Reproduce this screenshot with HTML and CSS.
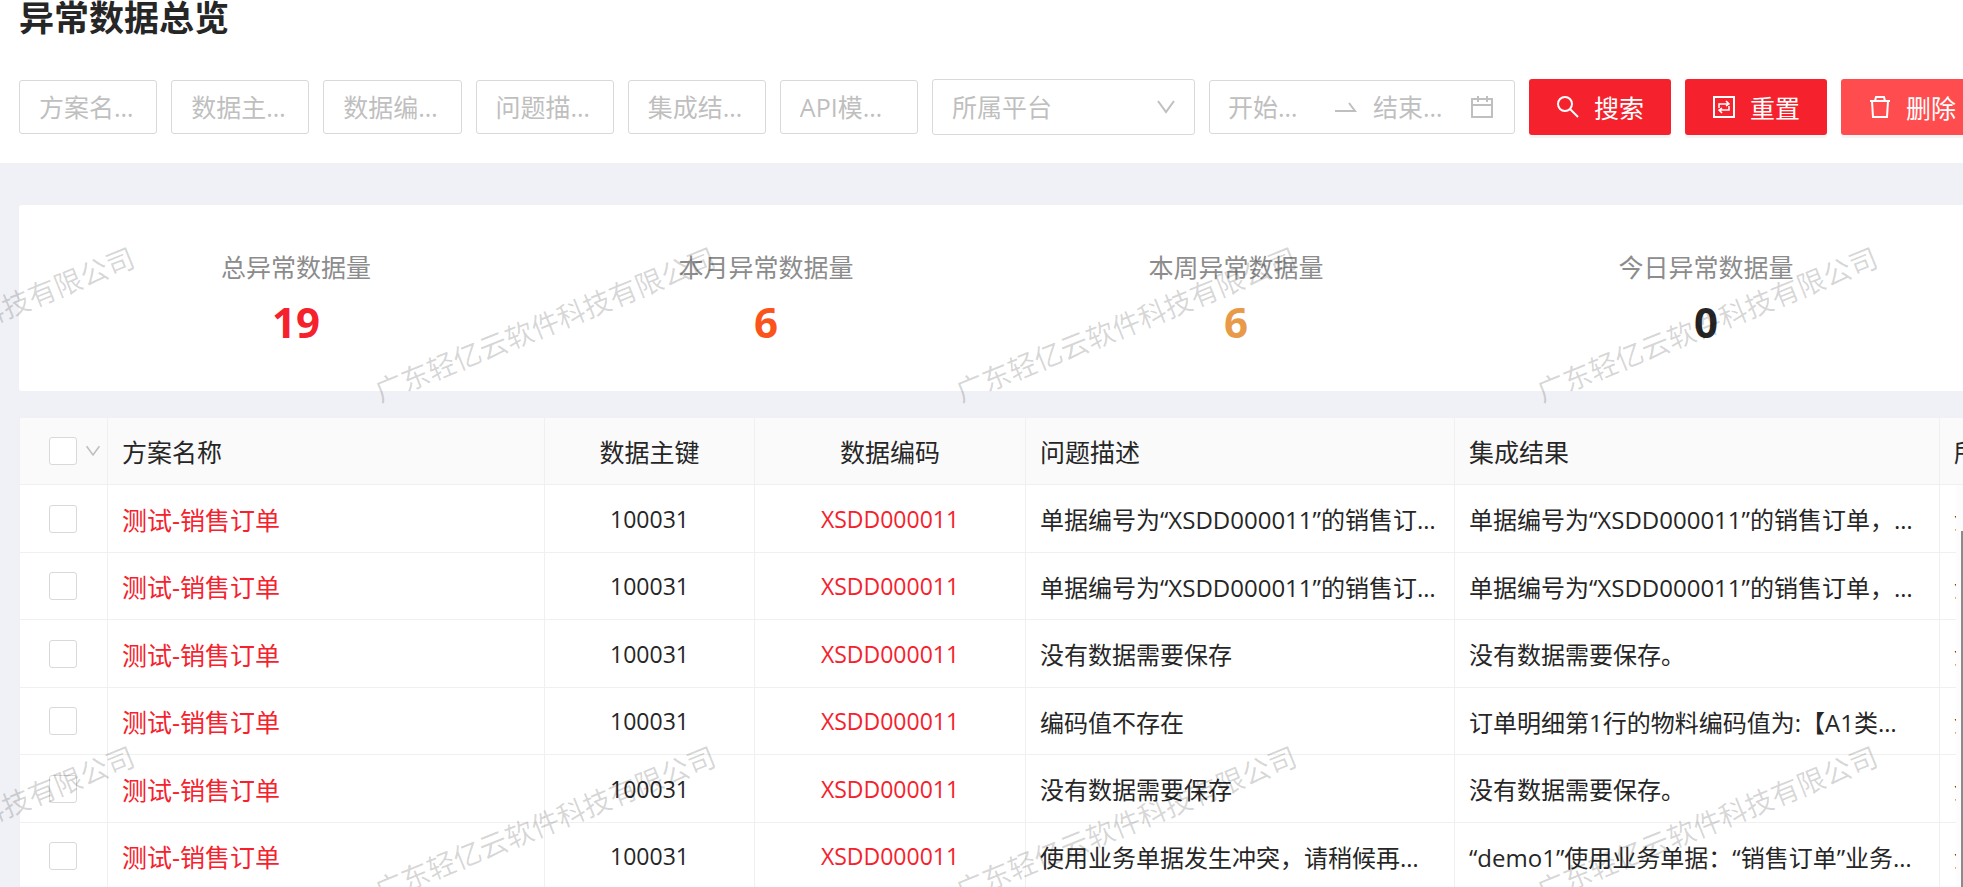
FILE: index.html
```html
<!DOCTYPE html>
<html lang="zh-CN">
<head>
<meta charset="utf-8">
<title>异常数据总览</title>
<link rel="stylesheet" href="styles.css">
</head>
<body>
<div class="page">
  <header class="page-header">
    <h1 class="title">异常数据总览</h1>
    <form class="filters">
      <input class="field" type="text" placeholder="方案名称" aria-label="方案名称">
      <input class="field" type="text" placeholder="数据主键" aria-label="数据主键">
      <input class="field" type="text" placeholder="数据编码" aria-label="数据编码">
      <input class="field" type="text" placeholder="问题描述" aria-label="问题描述">
      <input class="field" type="text" placeholder="集成结果" aria-label="集成结果">
      <input class="field" type="text" placeholder="API模块名" aria-label="API模块名">
      <div class="select-wrap">
        <select class="select" aria-label="所属平台"><option>所属平台</option></select>
        <svg class="select-arrow" viewBox="0 0 20 20"><path d="M2 4l8 11 8-11"/></svg>
      </div>
      <div class="range">
        <input class="range-input" type="text" placeholder="开始日期" aria-label="开始日期">
        <svg class="range-arrow" viewBox="0 0 24 24"><path d="M2 16h20l-6-8"/></svg>
        <input class="range-input" type="text" placeholder="结束日期" aria-label="结束日期">
        <svg class="range-icon" viewBox="0 0 24 24"><path d="M2 4h20v18H2zM2 10h20M8 1v6M17 1v6"/></svg>
      </div>
      <button class="btn" type="button"><svg class="btn-icon" viewBox="0 0 24 24"><circle cx="9" cy="9" r="7"/><path d="M14 14l8 8"/></svg>搜索</button>
      <button class="btn" type="button"><svg class="btn-icon" viewBox="0 0 24 24"><path d="M2 2h20v20H2z"/><path class="thin" d="M7 13V9h10M14 6l3 3-3 2M17 11v4H7M10 13l-3 2 3 3"/></svg>重置</button>
      <button class="btn btn-danger" type="button"><svg class="btn-icon" viewBox="0 0 24 24"><path d="M2 6h20M4 6l1 16h14l1-16M7 6l1-4h8l1 4"/></svg>删除</button>
    </form>
  </header>

  <main class="content">
    <section class="stats">
      <div class="stat"><span class="stat-label">总异常数据量</span><strong class="stat-value red">19</strong></div>
      <div class="stat"><span class="stat-label">本月异常数据量</span><strong class="stat-value orange">6</strong></div>
      <div class="stat"><span class="stat-label">本周异常数据量</span><strong class="stat-value amber">6</strong></div>
      <div class="stat"><span class="stat-label">今日异常数据量</span><strong class="stat-value">0</strong></div>
    </section>

    <div class="table-area">
    <table class="table">
      <colgroup><col class="c-check"><col class="c-name"><col class="c-key"><col class="c-code"><col class="c-issue"><col class="c-result"><col></colgroup>
      <thead>
        <tr>
          <th><span class="check-all"><input class="check" type="checkbox" aria-label="全选"><svg class="check-arrow" viewBox="0 0 20 20"><path d="M2 4l8 11 8-11"/></svg></span></th>
          <th>方案名称</th><th class="center">数据主键</th><th class="center">数据编码</th><th>问题描述</th><th>集成结果</th><th>所属平台</th>
        </tr>
      </thead>
      <tbody>
        <tr><td><input class="check" type="checkbox" aria-label="选择第1行"></td><td><a class="name" href="#">测试-销售订单</a></td><td class="num">100031</td><td class="num"><a href="#">XSDD000011</a></td><td>单据编号为“XSDD000011”的销售订单，没有数据需要保存</td><td class="result">单据编号为“XSDD000011”的销售订单，没有数据需要保存</td><td>金蝶云星空</td></tr>
        <tr><td><input class="check" type="checkbox" aria-label="选择第2行"></td><td><a class="name" href="#">测试-销售订单</a></td><td class="num">100031</td><td class="num"><a href="#">XSDD000011</a></td><td>单据编号为“XSDD000011”的销售订单，没有数据需要保存</td><td class="result">单据编号为“XSDD000011”的销售订单，没有数据需要保存</td><td>金蝶云星空</td></tr>
        <tr><td><input class="check" type="checkbox" aria-label="选择第3行"></td><td><a class="name" href="#">测试-销售订单</a></td><td class="num">100031</td><td class="num"><a href="#">XSDD000011</a></td><td>没有数据需要保存</td><td class="result">没有数据需要保存。</td><td>金蝶云星空</td></tr>
        <tr><td><input class="check" type="checkbox" aria-label="选择第4行"></td><td><a class="name" href="#">测试-销售订单</a></td><td class="num">100031</td><td class="num"><a href="#">XSDD000011</a></td><td>编码值不存在</td><td class="result">订单明细第1行的物料编码值为:【A1类型物料】</td><td>金蝶云星空</td></tr>
        <tr><td><input class="check" type="checkbox" aria-label="选择第5行"></td><td><a class="name" href="#">测试-销售订单</a></td><td class="num">100031</td><td class="num"><a href="#">XSDD000011</a></td><td>没有数据需要保存</td><td class="result">没有数据需要保存。</td><td>金蝶云星空</td></tr>
        <tr><td><input class="check" type="checkbox" aria-label="选择第6行"></td><td><a class="name" href="#">测试-销售订单</a></td><td class="num">100031</td><td class="num"><a href="#">XSDD000011</a></td><td>使用业务单据发生冲突，请稍候再次尝试</td><td class="result">“demo1”使用业务单据：“销售订单”业务操作冲突</td><td>金蝶云星空</td></tr>
      </tbody>
    </table>
    <div class="scrollbar"><div class="thumb"></div></div>
    </div>
  </main>
</div>
<div class="watermark" aria-hidden="true">
  <span>广东轻亿云软件科技有限公司</span><span>广东轻亿云软件科技有限公司</span><span>广东轻亿云软件科技有限公司</span><span>广东轻亿云软件科技有限公司</span>
  <span>广东轻亿云软件科技有限公司</span><span>广东轻亿云软件科技有限公司</span><span>广东轻亿云软件科技有限公司</span><span>广东轻亿云软件科技有限公司</span>
</div>
</body>
</html>
```
FILE: styles.css
```css
* { box-sizing: border-box; }

html { height: 100%; overflow: hidden; }

body {
  position: relative;
  height: 100%;
  margin: 0;
  overflow: hidden;
  background: #f0f1f6;
  color: #262626;
  font-family: "Open Sans", "Noto Sans CJK SC", sans-serif;
  font-size: 24px;
}

input, select, button { font: inherit; }
a { color: #f5222d; text-decoration: none; }
svg { fill: none; stroke: currentColor; stroke-width: 2; }
.thin { stroke-width: 1.5; }

/* The page is a little wider than the window and runs off its right edge. */
.page { width: calc(100% + 40px); }

.page-header {
  padding: 0 20px 28px 19px;
  background: #fff;
}

.title {
  margin: 0 0 43px;
  font-size: 35px;
  line-height: 36px;
  font-weight: 700;
}

.filters {
  display: flex;
  align-items: center;
  gap: 14px;
}

.field, .select, .range {
  border: 1px solid #d9d9d9;
  border-radius: 3px;
  background: #fff;
}

.field {
  flex: 1;
  min-width: 0;
  height: 54px;
  padding: 0 19px;
  font-size: 25px;
  text-overflow: ellipsis;
}

::placeholder { color: #bfbfbf; opacity: 1; }

.select-wrap { position: relative; flex: none; width: 263px; }

.select {
  width: 100%;
  height: 56px;
  padding: 0 19px;
  appearance: none;
  color: #bfbfbf;
  font-size: 25px;
}

.select-arrow {
  position: absolute;
  top: 18px;
  right: 19px;
  width: 20px;
  height: 20px;
  color: #bfbfbf;
  pointer-events: none;
}

.range {
  display: flex;
  align-items: center;
  flex: none;
  width: 306px;
  height: 54px;
  padding: 0 20px 0 18px;
  color: #bfbfbf;
}

.range-input {
  flex: 1;
  min-width: 0;
  padding: 0;
  border: 0;
  background: none;
  font-size: 25px;
  text-overflow: ellipsis;
}

.range-arrow { flex: none; width: 24px; height: 24px; margin: 0 16px 0 32px; }
.range-icon { flex: none; width: 24px; height: 24px; margin-left: 24px; }

.btn {
  display: flex;
  align-items: center;
  justify-content: center;
  flex: none;
  gap: 14px;
  width: 142px;
  height: 56px;
  padding: 0;
  border: 0;
  border-radius: 3px;
  background: #f5222d;
  box-shadow: 0 3px 0 rgba(0, 0, 0, 0.045);
  color: #fff;
  font-size: 25px;
}

.btn-danger { background: #ff4d4f; }
.btn-icon { width: 24px; height: 24px; }

.content { padding: 42px 20px 0 19px; }

.stats {
  display: grid;
  grid-template-columns: repeat(4, 1fr);
  margin-bottom: 27px;
  padding: 42px;
  border-radius: 3px;
  background: #fff;
}

.stat {
  display: flex;
  flex-direction: column;
  align-items: center;
  gap: 8px;
}

.stat-label { color: #8c8c8c; font-size: 25px; line-height: 40px; }
.stat-value { font-size: 42px; line-height: 54px; }
.red { color: #f5222d; }
.orange { color: #fa541c; }
.amber { color: #e89a48; }

.table-area { position: relative; }

.table {
  width: 100%;
  table-layout: fixed;
  border-collapse: separate;
  border-spacing: 0;
  border-left: 1px solid #f0f0f0;
  background: #fff;
}

.c-check { width: 88px; }
.c-name { width: 437px; }
.c-key { width: 210px; }
.c-code { width: 271px; }
.c-issue { width: 429px; }
.c-result { width: 485px; }

.table th, .table td {
  padding: 0 14px;
  border-right: 1px solid #f0f0f0;
  border-bottom: 1px solid #f0f0f0;
  overflow: hidden;
  text-align: left;
  text-overflow: ellipsis;
  white-space: nowrap;
}

.table th {
  height: 67px;
  background: #fafafa;
  font-size: 25px;
  font-weight: 400;
}

.table tr { height: 68px; }
.table thead tr { height: 67px; }
.table tbody tr:nth-child(even) { height: 67px; }

.table .center { text-align: center; }
.table .num { text-align: center; font-size: 23px; }
.table .result { padding-right: 20px; }
.table td:last-child { text-overflow: clip; }
.name { font-size: 25px; }

.table th:first-child, .table td:first-child { padding: 0 0 0 29px; }

.check {
  display: block;
  width: 28px;
  height: 28px;
  margin: 0;
  appearance: none;
  border: 1px solid #d9d9d9;
  border-radius: 3px;
  background: #fff;
}

.check-all { display: flex; align-items: center; gap: 8px; }
.check-arrow { width: 16px; height: 16px; color: #bfbfbf; }

/* Vertical scroll track over the table body's right end. */
.scrollbar {
  position: absolute;
  top: 67px;
  right: 0;
  bottom: 0;
  width: 27px;
  padding: 46px 0 0 5px;
  background: #fcfcfc;
}

.thumb { height: 100%; background: #8b8b8b; }

.watermark {
  position: absolute;
  top: 306px;
  left: -218px;
  display: grid;
  grid-template-columns: repeat(4, 581px);
  grid-auto-rows: 499px;
  color: rgba(0, 0, 0, 0.16);
  font-size: 28px;
  line-height: 36px;
  pointer-events: none;
}

.watermark span {
  justify-self: start;
  align-self: start;
  transform: rotate(-22deg);
  white-space: nowrap;
}
```
